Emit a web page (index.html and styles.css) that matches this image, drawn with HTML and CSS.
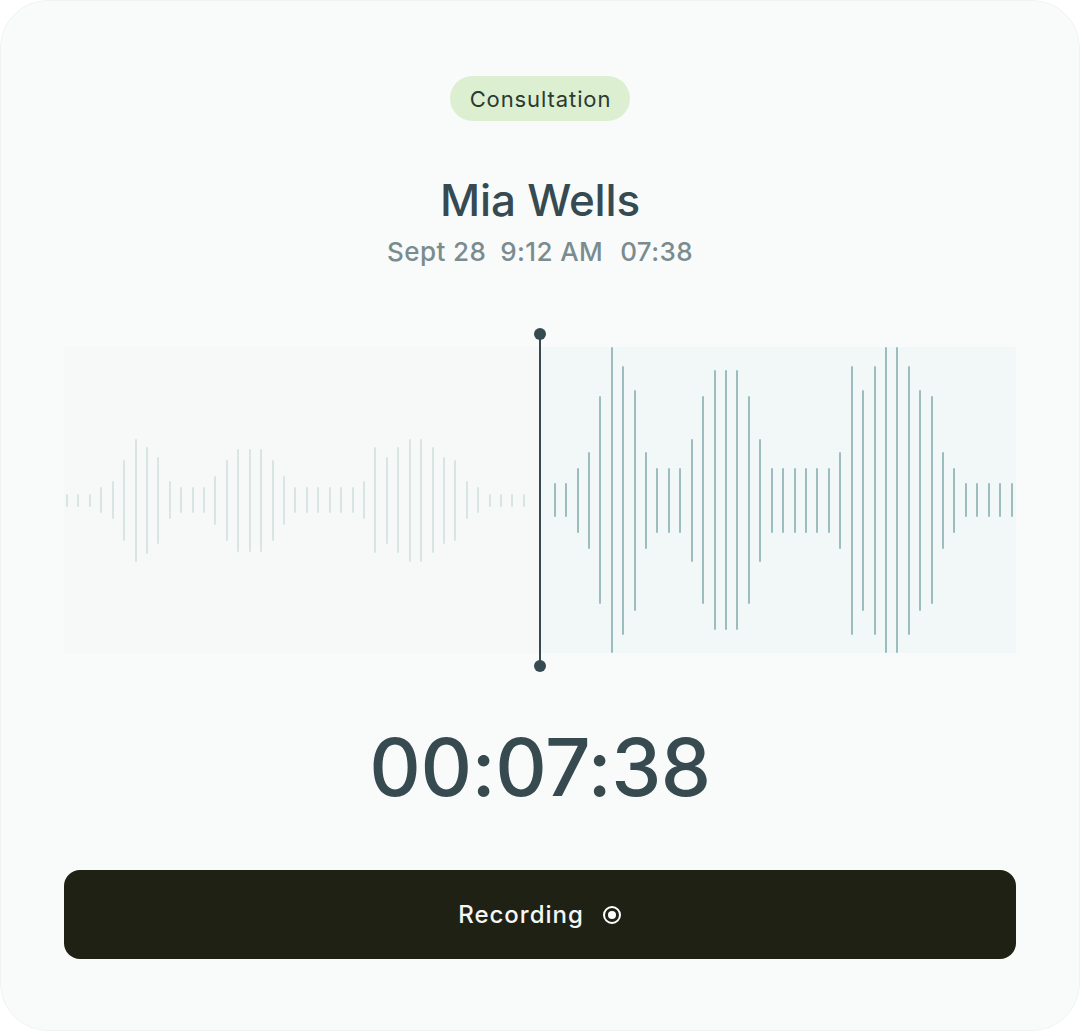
FILE: index.html
```html
<!DOCTYPE html>
<html lang="en">
<head>
<meta charset="utf-8">
<title>Recording</title>
<link rel="stylesheet" href="styles.css">
</head>
<body>
<main class="card">
  <span class="badge">Consultation</span>
  <h1 class="name">Mia Wells</h1>
  <p class="meta"><span>Sept 28</span><span>9:12 AM</span><span class="dur">07:38</span></p>

  <section class="wave">
    <div class="half past" id="past"></div>
    <div class="half future" id="future"></div>
    <div class="playhead"><i class="dot top"></i><i class="dot bottom"></i></div>
  </section>

  <div class="timer">00:07:38</div>

  <button class="record">
    <span>Recording</span>
    <svg class="rec-icon" width="20" height="20" viewBox="0 0 20 20" aria-hidden="true">
      <circle cx="10" cy="10" r="8" fill="none" stroke="#ffffff" stroke-width="2"/>
      <circle cx="10" cy="10" r="4" fill="#ffffff"/>
    </svg>
  </button>
</main>
<script src="script.js"></script>
</body>
</html>
```

FILE: script.js
```js
var past = [13,13,13,26,38,81,123,107,87,38,26,26,26,49,81,103,103,103,81,49,26,26,26,26,26,26,38,106,87,106,123,123,106,87,81,38,26,13,13,13,13];
var future = [34,34,65,97,208,306,269,221,97,65,65,65,123,208,260,260,260,208,123,65,65,65,65,65,65,97,269,221,269,306,306,269,221,208,97,65,34,34,34,34,34];
function fill(id, arr) {
  var el = document.getElementById(id);
  arr.forEach(function (h) {
    var b = document.createElement('span');
    b.className = 'bar';
    b.style.height = h + 'px';
    el.appendChild(b);
  });
}
fill('past', past);
fill('future', future);
```

FILE: styles.css
```css
html, body {
  margin: 0;
  padding: 0;
  background: #ffffff;
}
body {
  font-family: Inter, "Noto Sans", "Liberation Sans", sans-serif;
}
.card {
  box-sizing: border-box;
  width: 1080px;
  height: 1031px;
  background: #f9fbfb;
  border: 1px solid #f0f3f3;
  border-radius: 48px;
  padding: 75px 63px 71px;
  display: flex;
  flex-direction: column;
  align-items: center;
}
.badge {
  display: flex;
  align-items: center;
  height: 45px;
  padding: 0 19px 0 20px;
  border-radius: 23px;
  background: #dcefd1;
  color: #2a3a30;
  font-size: 22px;
  font-weight: 400;
  letter-spacing: 0.9px;
}
.name {
  margin: 53px 0 0;
  font-size: 44px;
  line-height: 52px;
  font-weight: 500;
  color: #364a52;
  letter-spacing: -0.2px;
}
.meta {
  margin: 11px 0 0;
  font-size: 26px;
  line-height: 30px;
  font-weight: 500;
  letter-spacing: 0.4px;
  color: #7a8c8e;
  display: flex;
  gap: 14px;
}
.meta .dur {
  margin-left: 3px;
}
.wave {
  position: relative;
  margin-top: 61px;
  width: 952px;
  padding: 19px 0;
  display: flex;
}
.half {
  width: 476px;
  height: 306px;
  display: flex;
  align-items: center;
  gap: 9.43px;
  box-sizing: border-box;
}
.past {
  background: #f6f9f8;
  padding-left: 2px;
}
.future {
  background: #f2f7f7;
  padding-left: 13.7px;
}
.bar {
  flex: none;
  width: 2px;
  border-radius: 1px;
}
.past .bar { background: #d8e5e5; }
.future .bar { background: #9dbcbd; }
.playhead {
  position: absolute;
  left: 475px;
  top: 6px;
  bottom: 6px;
  width: 2px;
  background: #364a52;
}
.dot {
  position: absolute;
  left: -5px;
  width: 12px;
  height: 12px;
  border-radius: 50%;
  background: #364a52;
}
.dot.top { top: -6px; }
.dot.bottom { bottom: -6px; }
.timer {
  margin-top: 47px;
  font-size: 80px;
  line-height: 96px;
  font-weight: 500;
  color: #364a50;
  letter-spacing: -0.5px;
}
.record {
  margin-top: 55px;
  width: 952px;
  height: 89px;
  border: 0;
  border-radius: 16px;
  background: #1e2114;
  color: #f4f7f6;
  font-family: inherit;
  font-size: 24px;
  font-weight: 500;
  letter-spacing: 1px;
  display: flex;
  align-items: center;
  justify-content: center;
  gap: 18px;
}
.rec-icon {
  display: block;
}
```
